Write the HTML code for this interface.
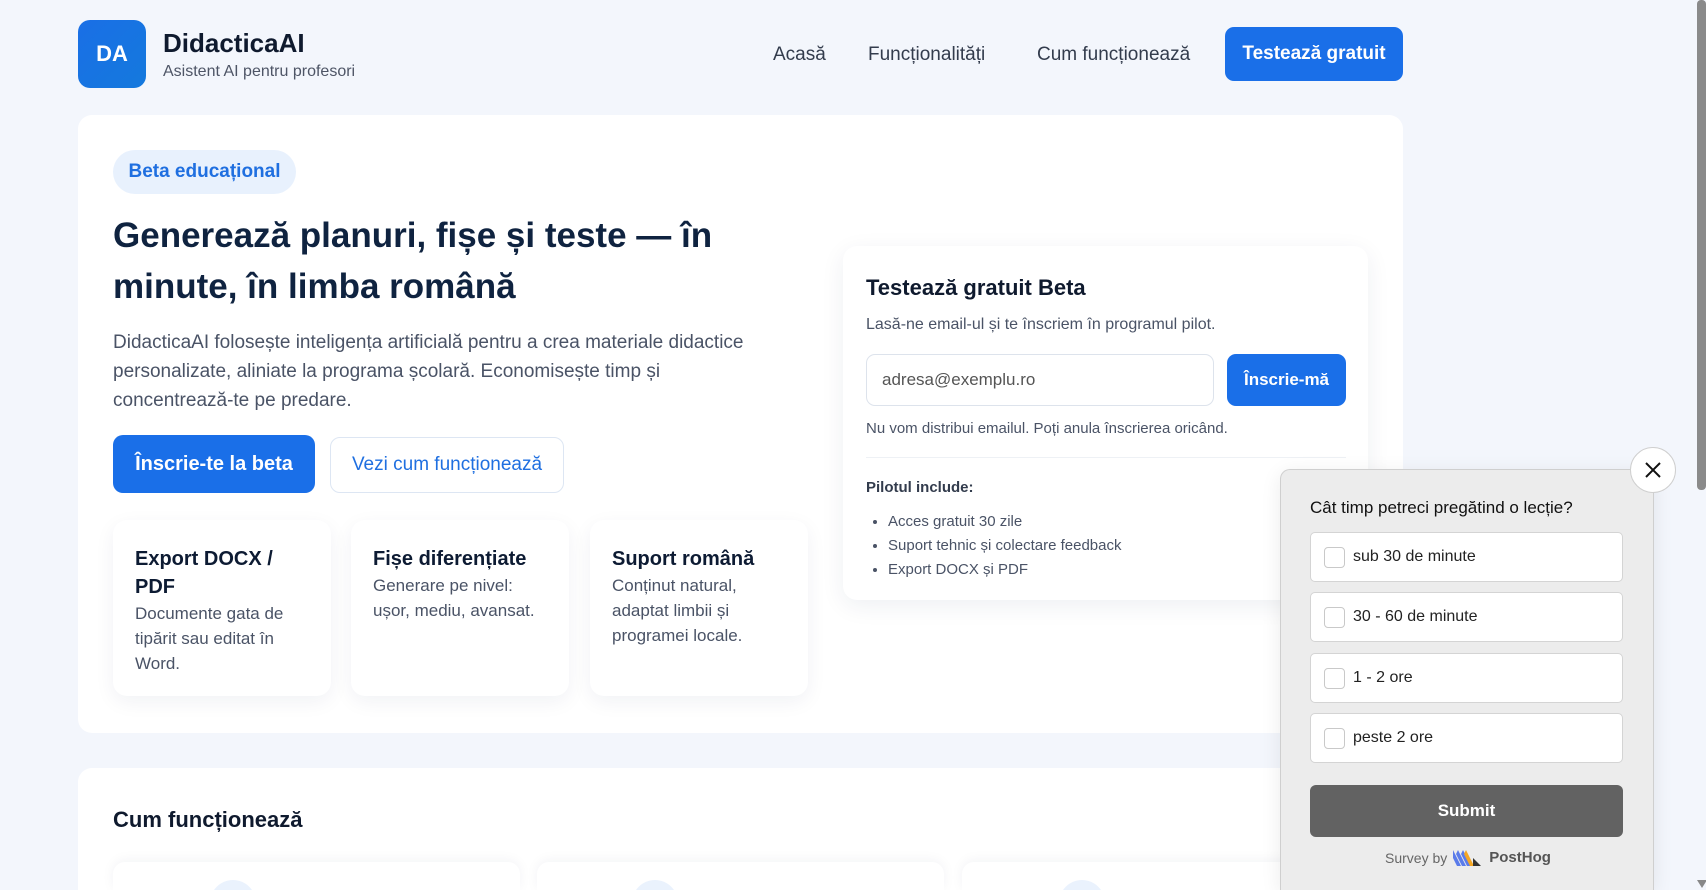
<!DOCTYPE html>
<html style="width:1706px;height:890px;overflow:hidden"><head><meta charset="utf-8"><style>
*{box-sizing:border-box;margin:0;padding:0}
body{width:1706px;height:890px;overflow:hidden;background:#f3f6fc;font-family:"Liberation Sans",sans-serif;color:#0d1b33;position:relative}
.a{position:absolute}
.logo{left:78px;top:20px;width:68px;height:68px;border-radius:12px;background:linear-gradient(135deg,#1a6fe6,#1479dd);color:#fff;font-weight:bold;font-size:22px;display:flex;align-items:center;justify-content:center}
.nav{font-size:19px;color:#333c4d;top:44px}
.card{background:#fff;border-radius:14px}
.fc{background:#fff;border-radius:14px;box-shadow:0 6px 20px rgba(20,40,80,.06);padding:25px 22px;width:218px;height:176px;top:520px}
.fc h3{font-size:20px;line-height:28px}
.fc p{font-size:17px;line-height:25px;color:#4a5366}
.opt{left:1310px;width:313px;height:50px;background:#fff;border:1px solid #d4d4d4;border-radius:5px;font-size:16px;color:#222;display:flex;align-items:center;padding-left:42px}
.opt:before{content:"";position:absolute;left:13px;top:14px;width:19px;height:19px;border:1px solid #c9c9c9;border-radius:4px}
li{margin-bottom:4px}
</style></head><body>
<div class="a logo">DA</div>
<div class="a" style="left:163px;top:28px;font-size:26px;font-weight:bold;color:#0f1a2e">DidacticaAI</div>
<div class="a" style="left:163px;top:63px;font-size:16px;color:#4e5566">Asistent AI pentru profesori</div>
<div class="a nav" style="left:773px">Acasă</div>
<div class="a nav" style="left:868px">Funcționalități</div>
<div class="a nav" style="left:1037px">Cum funcționează</div>
<div class="a" style="left:1225px;top:27px;width:178px;height:54px;border-radius:9px;background:#1a6fe8;color:#fff;font-size:19px;font-weight:bold;display:flex;align-items:center;justify-content:center">Testează gratuit</div>

<div class="a card" style="left:78px;top:115px;width:1325px;height:618px"></div>
<div class="a" style="left:113px;top:150px;width:183px;height:44px;border-radius:22px;background:#e8f1fd;color:#1f6fe0;font-size:19px;font-weight:bold;display:flex;align-items:center;justify-content:center">Beta educațional</div>
<div class="a" style="left:113px;top:210px;width:640px;font-size:35px;font-weight:bold;line-height:51px;color:#0f2340">Generează planuri, fișe și teste — în minute, în limba română</div>
<div class="a" style="left:113px;top:328px;width:665px;font-size:19px;line-height:29px;color:#4a5366">DidacticaAI folosește inteligența artificială pentru a crea materiale didactice personalizate, aliniate la programa școlară. Economisește timp și concentrează-te pe predare.</div>
<div class="a" style="left:113px;top:435px;width:202px;height:58px;border-radius:10px;background:#1a6fe8;color:#fff;font-size:20px;font-weight:bold;display:flex;align-items:center;justify-content:center">Înscrie-te la beta</div>
<div class="a" style="left:330px;top:437px;width:234px;height:56px;border-radius:10px;border:1px solid #dde6f3;background:#fff;color:#1f6fe0;font-size:19px;display:flex;align-items:center;justify-content:center">Vezi cum funcționează</div>
<div class="a fc" style="left:113px"><h3>Export DOCX / PDF</h3><p>Documente gata de tipărit sau editat în Word.</p></div>
<div class="a fc" style="left:351px"><h3>Fișe diferențiate</h3><p>Generare pe nivel: ușor, mediu, avansat.</p></div>
<div class="a fc" style="left:590px"><h3>Suport română</h3><p>Conținut natural, adaptat limbii și programei locale.</p></div>

<div class="a card" style="left:843px;top:246px;width:525px;height:354px;box-shadow:0 6px 24px rgba(20,40,80,.07)"></div>
<div class="a" style="left:866px;top:275px;font-size:22px;font-weight:bold;color:#0f1a2e">Testează gratuit Beta</div>
<div class="a" style="left:866px;top:316px;font-size:16px;color:#4a5366">Lasă-ne email-ul și te înscriem în programul pilot.</div>
<div class="a" style="left:866px;top:354px;width:348px;height:52px;border:1px solid #dde3ec;border-radius:9px;font-size:17px;color:#555;padding:15px 0 0 15px">adresa@exemplu.ro</div>
<div class="a" style="left:1227px;top:354px;width:119px;height:52px;border-radius:9px;background:#1a6fe8;color:#fff;font-size:17px;font-weight:bold;display:flex;align-items:center;justify-content:center">Înscrie-mă</div>
<div class="a" style="left:866px;top:420px;font-size:15px;color:#4a5366">Nu vom distribui emailul. Poți anula înscrierea oricând.</div>
<div class="a" style="left:866px;top:457px;width:480px;height:1px;background:#eef1f5"></div>
<div class="a" style="left:866px;top:479px;font-size:15px;font-weight:bold;color:#333c4d">Pilotul include:</div>
<ul class="a" style="left:888px;top:512px;font-size:15px;color:#4a5366;line-height:20px">
<li>Acces gratuit 30 zile</li><li>Suport tehnic și colectare feedback</li><li>Export DOCX și PDF</li></ul>

<div class="a card" style="left:78px;top:768px;width:1325px;height:122px;border-radius:14px 14px 0 0"></div>
<div class="a" style="left:113px;top:807px;font-size:22px;font-weight:bold;color:#0f1a2e">Cum funcționează</div>
<div class="a" style="left:113px;top:862px;width:407px;height:28px;background:#fff;border-radius:12px 12px 0 0;box-shadow:0 -2px 12px rgba(20,40,80,.05);overflow:hidden"><div class="a" style="left:97px;top:18px;width:46px;height:46px;border-radius:50%;background:#eaf2fd"></div></div>
<div class="a" style="left:537px;top:862px;width:407px;height:28px;background:#fff;border-radius:12px 12px 0 0;box-shadow:0 -2px 12px rgba(20,40,80,.05);overflow:hidden"><div class="a" style="left:95px;top:18px;width:46px;height:46px;border-radius:50%;background:#eaf2fd"></div></div>
<div class="a" style="left:962px;top:862px;width:407px;height:28px;background:#fff;border-radius:12px 12px 0 0;box-shadow:0 -2px 12px rgba(20,40,80,.05);overflow:hidden"><div class="a" style="left:97px;top:18px;width:46px;height:46px;border-radius:50%;background:#eaf2fd"></div></div>

<div class="a" style="left:1280px;top:469px;width:374px;height:421px;background:#ececec;border:1px solid #cfcfcf;border-bottom:none;border-radius:10px 10px 0 0;box-shadow:0 4px 20px rgba(0,0,0,.08)"></div>
<div class="a" style="left:1630px;top:447px;width:46px;height:46px;border-radius:50%;background:#fff;border:1px solid #cfcfcf"><svg width="46" height="46" viewBox="0 0 46 46" style="position:absolute;left:-1px;top:-1px"><path d="M16 16L30 30M30 16L16 30" stroke="#111" stroke-width="2" fill="none"/></svg></div>
<div class="a" style="left:1310px;top:498px;font-size:17px;color:#111">Cât timp petreci pregătind o lecție?</div>
<div class="a opt" style="top:532px">sub 30 de minute</div>
<div class="a opt" style="top:592px">30 - 60 de minute</div>
<div class="a opt" style="top:653px">1 - 2 ore</div>
<div class="a opt" style="top:713px">peste 2 ore</div>
<div class="a" style="left:1310px;top:785px;width:313px;height:52px;background:#626262;border-radius:6px;color:#fff;font-weight:bold;font-size:17px;display:flex;align-items:center;justify-content:center">Submit</div>
<div class="a" style="left:1385px;top:849px;font-size:14px;color:#666;display:flex;align-items:center;gap:6px">Survey by <svg width="30" height="16" viewBox="0 0 30 16"><path d="M0 0l8 16H4L0 8zM5 0l8 16H9L3 4zM10 0l8 16h-4L8 4z" fill="#5a7bea"/><path d="M13 0l8 16h-4l-6-12z" fill="#f5a623"/><path d="M20 8l8 8h-8z" fill="#333"/></svg><b style="color:#555;font-size:15px">PostHog</b></div>

<div class="a" style="left:1697px;top:0;width:9px;height:890px;background:#f3f6fc"></div>
<div class="a" style="left:1697px;top:0;width:9px;height:490px;background:#8a8a8a;border-radius:4px"></div>
<div class="a" style="left:1697px;top:880px;width:0;height:0;border-left:5px solid transparent;border-right:5px solid transparent;border-top:8px solid #888"></div>
</body></html>
